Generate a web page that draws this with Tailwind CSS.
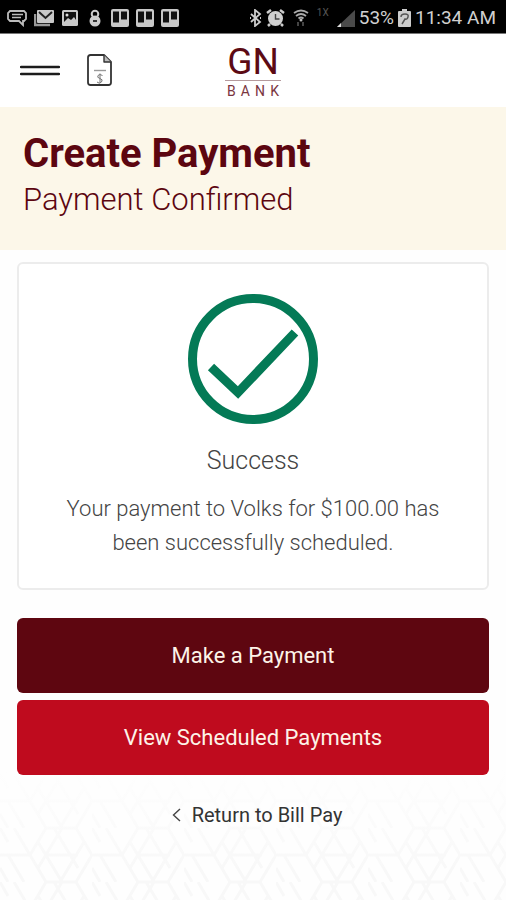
<!DOCTYPE html>
<html lang="en">
<head>
<meta charset="utf-8">
<meta name="viewport" content="width=device-width, initial-scale=1">
<title>Create Payment</title>
<script src="https://cdn.jsdelivr.net/npm/@tailwindcss/browser@4"></script>
</head>
<body class="min-h-screen bg-[#fefefe] font-['Roboto',sans-serif] text-[#333] flex flex-col">

<div class="h-[34px] bg-black border-b border-[#777] flex items-center justify-between pl-[7px] pr-[10px] pt-[3px] text-[#d0d0d0]">
  <div class="flex items-center gap-[7px]">
    <svg class="w-[20px] h-[18px]" viewBox="0 0 20 18" fill="none" stroke="#bcbcbc" stroke-width="1.8"><path d="M3 2h14l2 2v6l-2 2h-1v4l-4-4H3l-2-2V4z"/><path d="M5 5.500h11M5 8.500h9" stroke-width="1.400"/></svg>
    <svg class="w-[20px] h-[18px]" viewBox="0 0 20 18" fill="none"><path d="M1 5v11h15" stroke="#999" stroke-width="2.500"/><rect x="3" y="1" width="17" height="13" rx="1" fill="#c8c8c8"/><path d="M5 3l6.500 6L18 3" stroke="#222" stroke-width="2"/></svg>
    <svg class="w-[18px] h-[18px]" viewBox="0 0 18 18"><rect x="1" y="1" width="16" height="16" rx="1.500" fill="#c8c8c8"/><path d="M3 3h12v8l-2-3-3 3-3-2-4 4z" fill="#111"/><circle cx="6" cy="6" r="1.500" fill="#ddd"/></svg>
    <svg class="w-[18px] h-[18px]" viewBox="0 0 18 18"><circle cx="9" cy="5" r="3.300" fill="none" stroke="#ccc" stroke-width="2"/><circle cx="9" cy="12" r="5.500" fill="#ccc"/><path d="M7 12h4" stroke="#333" stroke-width="2"/></svg>
    <svg class="w-[18px] h-[18px]" viewBox="0 0 18 18"><rect width="18" height="18" rx="2" fill="#c8c8c8"/><path d="M2 2.500h6v11H2zM10 2.500h6v8h-6z" fill="#111"/></svg>
    <svg class="w-[18px] h-[18px]" viewBox="0 0 18 18"><rect width="18" height="18" rx="2" fill="#c8c8c8"/><path d="M2 2.500h6v11H2zM10 2.500h6v8h-6z" fill="#111"/></svg>
    <svg class="w-[18px] h-[18px]" viewBox="0 0 18 18"><rect width="18" height="18" rx="2" fill="#c8c8c8"/><path d="M2 2.500h6v11H2zM10 2.500h6v8h-6z" fill="#111"/></svg>
  </div>
  <div class="flex items-center gap-1">
    <svg class="w-[13px] h-[18px]" viewBox="0 0 13 18" fill="none" stroke="#ccc" stroke-width="1.800"><path d="M2 5l9 8-5 4V1l5 4-9 8M1 9h1M11 9h1"/></svg>
    <svg class="w-[19px] h-[18px]" viewBox="0 0 19 18"><path d="M1 4l4-3M18 4l-4-3M4 15l-2 2M15 15l2 2" stroke="#ccc" stroke-width="2.500"/><circle cx="9.500" cy="9.500" r="7.500" fill="#d0d0d0"/><path d="M9.500 5v5h4" fill="none" stroke="#444" stroke-width="1.400"/></svg>
    <svg class="w-[16px] h-[18px] ml-1" viewBox="0 0 16 18" fill="none"><path d="M1 4q7-5 14 0M3 7q5-4 10 0M5.500 9.500q2.500-2 5 0" stroke="#aaa" stroke-width="1.800"/><circle cx="8" cy="11" r="1.500" fill="#bbb"/><path d="M5 13v4M10 13v4" stroke="#444" stroke-width="2"/></svg>
    <span class="text-[10px] leading-[10px] text-[#555] self-start pl-1">1X</span>
    <svg class="w-[18px] h-[18px] ml-1" viewBox="0 0 18 18"><path d="M0 18L18 1v17z" fill="#4a4a4a"/><path d="M0 18l4-4v4z" fill="#ddd"/></svg>
    <span class="text-[19px] leading-[20px]">53%</span>
    <svg class="w-[13px] h-[18px]" viewBox="0 0 13 18"><path d="M4 0h5v2h3q1 0 1 1v14q0 1-1 1H1q-1 0-1-1V3q0-1 1-1h3z" fill="#ccc"/><path d="M3 8q0-3 4-3t3 3-3 2l-3 5" fill="none" stroke="#555" stroke-width="1.500"/></svg>
    <span class="text-[19px] leading-[20px]">11:34 AM</span>
  </div>
</div>

<header class="h-[73px] bg-white grid grid-cols-[1fr_auto_1fr] items-center px-5">
  <div class="flex items-center gap-[27px]">
    <button type="button" aria-label="Menu"><svg class="w-[40px] h-[12px]" viewBox="0 0 40 12" stroke="#1c1c1c" stroke-width="2.400" stroke-linecap="round"><path d="M1 2h38M1 9h38"/></svg></button>
    <button type="button" aria-label="Bills"><svg class="w-[25px] h-[33px]" viewBox="0 0 25 33" fill="none" stroke="#333" stroke-width="1.800" stroke-linejoin="round"><path d="M3.500 1H17l7 7v20.500q0 2.500-2.500 2.500h-18Q1 31 1 28.500v-25Q1 1 3.500 1z"/><path d="M17 1v7h7" fill="#bbb" stroke-width="1.400"/><path d="M7 16.500h12" stroke="#999" stroke-width="1.400"/><path d="M15.500 21.500q-3-2-4.500 0t2 3 1.500 3.500-4.500 0M13 19.500v9.500" stroke="#777" stroke-width="1"/></svg></button>
  </div>
  <div class="w-[56px] text-[#5c0a14] flex flex-col items-center">
    <span class="text-[37px] leading-[36px]">GN</span>
    <span class="w-full border-t border-[#b59a9d] flex justify-between px-[2px] pt-[3px] text-[14px] leading-[14px] text-[#7a3540]"><span>B</span><span>A</span><span>N</span><span>K</span></span>
  </div>
</header>

<section class="bg-[#fcf7e9] pl-[23px] pr-6 pt-[22px] pb-[29px] text-[#5c0610]">
  <h1 class="text-[40px] leading-[50px] font-bold">Create Payment</h1>
  <p class="text-[31px] leading-[42px] font-light">Payment Confirmed</p>
</section>

<main class="flex-1 px-[17px] pt-3 relative isolate">
  <svg class="absolute inset-x-0 bottom-0 w-full h-[130px] -z-10" aria-hidden="true">
    <defs>
      <pattern id="weave" width="92" height="54" patternUnits="userSpaceOnUse" patternTransform="translate(0 4)">
        <path d="M0 27h30l16-27h30l16 27-16 27H46L30 27M8 27l16 27M14 0l16 27M38 14l24 40M54 0l24 40M62 0l-24 40M84 14L60 54M0 0l8 14M46 27h32M0 40l8 14" fill="none" stroke="#f8f8f8" stroke-width="3"/>
      </pattern>
      <linearGradient id="fade" x1="0" y1="0" x2="0" y2="1"><stop offset="0" stop-color="#fefefe"/><stop offset=".8" stop-color="#fefefe" stop-opacity="0"/></linearGradient>
    </defs>
    <rect width="100%" height="100%" fill="url(#weave)"/>
    <rect width="100%" height="100%" fill="url(#fade)"/>
  </svg>

  <section class="bg-white border-2 border-[#ececec] rounded-md h-[328px] px-8 pt-[30px] text-center text-[#444]">
    <svg class="w-[130px] h-[130px] mx-auto" viewBox="0 0 130 130" fill="none" stroke="#047a56" aria-hidden="true"><circle cx="65" cy="65" r="60.500" stroke-width="9"/><path d="M23 73l27 25.500 57-60" stroke-width="9"/></svg>
    <h2 class="mt-5 text-[25px] leading-[34px] font-light">Success</h2>
    <p class="mt-[14px] text-[22px] leading-[34px] font-light">Your payment to Volks for $100.00 has been successfully scheduled.</p>
  </section>

  <div class="mt-7 flex flex-col gap-[7px]">
    <button type="button" class="h-[75px] rounded-md bg-[#5e0610] text-[#fdf3e8] text-[22px] leading-7">Make a Payment</button>
    <button type="button" class="h-[75px] rounded-md bg-[#bf0b1e] text-[#fdf3e8] text-[22px] leading-7">View Scheduled Payments</button>
  </div>

  <div class="mt-[26px] flex justify-center pl-2">
    <a href="#" class="flex items-center gap-[11px] text-[20px] leading-7"><svg class="w-[9px] h-[14px]" viewBox="0 0 9 14" fill="none" stroke="#444" stroke-width="1.400" aria-hidden="true"><path d="M8 1L1.500 7 8 13"/></svg>Return to Bill Pay</a>
  </div>
</main>
</body>
</html>
